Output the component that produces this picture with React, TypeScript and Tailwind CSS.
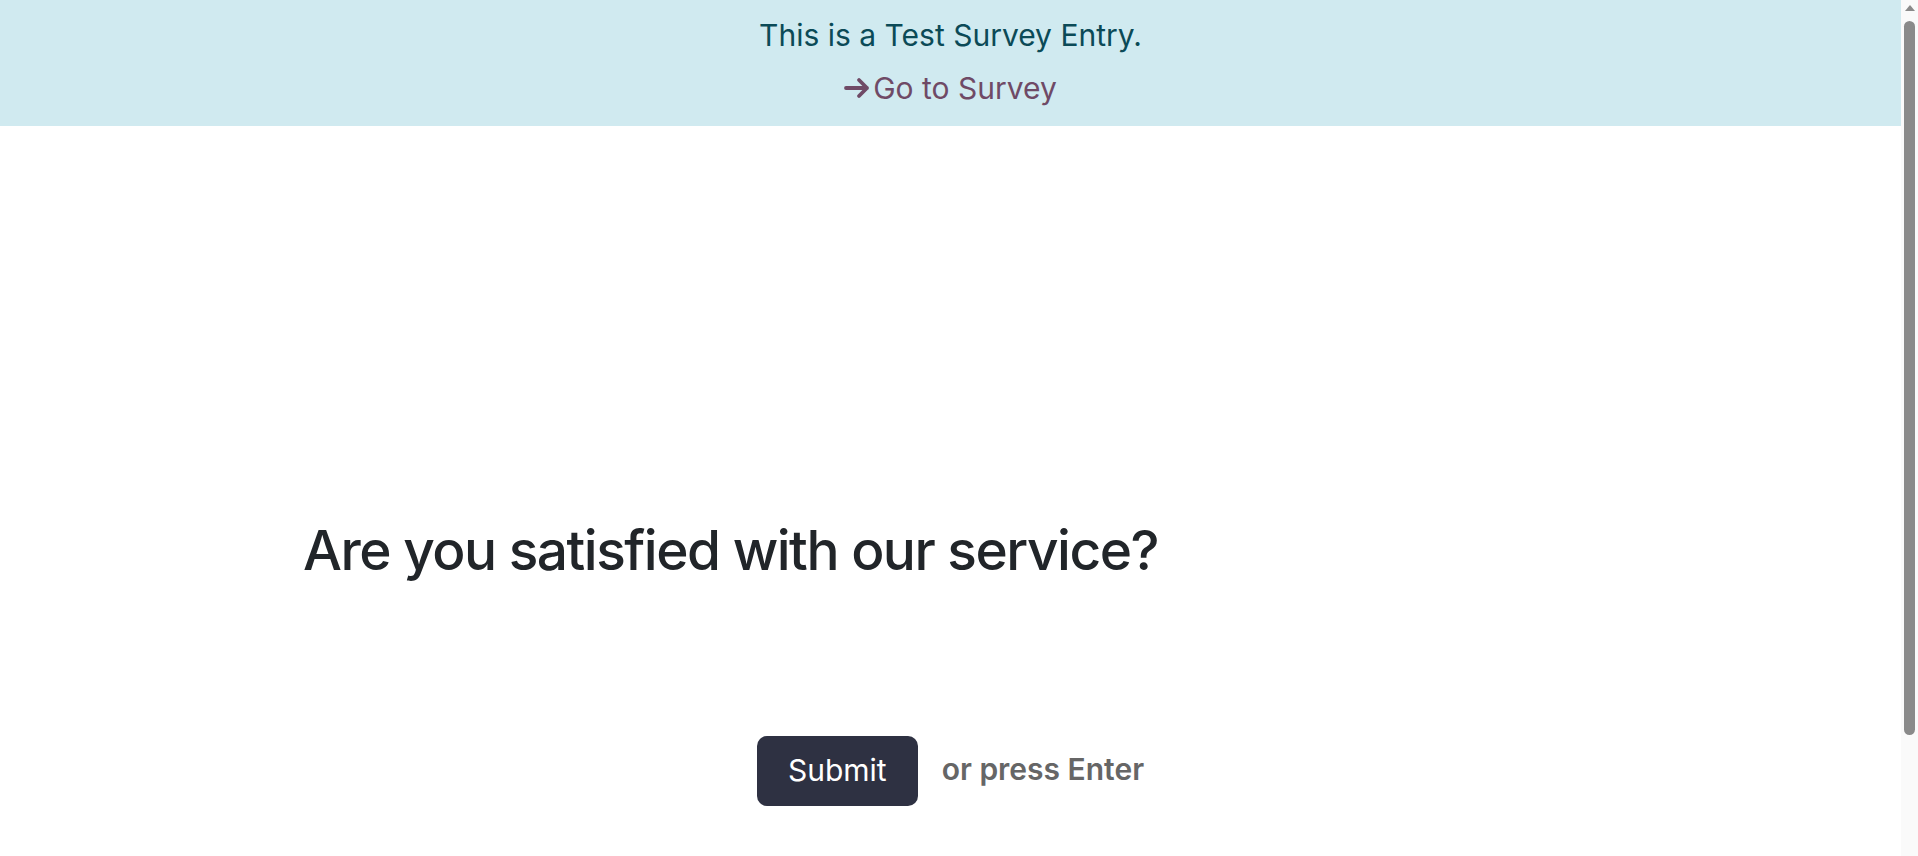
import React from "react";

export default function App() {
  return (
    <div
      className="flex h-[856px] w-full overflow-hidden bg-white"
      style={{ fontFamily: "Inter, 'Noto Sans', sans-serif" }}
    >
      <div className="flex flex-1 flex-col">
        <div className="flex h-[126px] flex-col items-center bg-[#d0eaf0] pt-[14px]">
          <div className="text-[30px] leading-[42px] text-[#0b4a57]">
            This is a Test Survey Entry.
          </div>
          <a className="mt-[11px] flex items-center text-[30px] leading-[42px] text-[#6f4a66]">
            <svg width="28" height="24" viewBox="0 0 28 24" className="mr-[1px]">
              <path
                d="M2 12 H23 M15 4 L23 12 L15 20"
                fill="none"
                stroke="#6f4a66"
                strokeWidth="3.8"
                strokeLinecap="round"
                strokeLinejoin="round"
              />
            </svg>
            Go to Survey
          </a>
        </div>
        <div className="mt-[391px] pl-[303px]">
          <h1 className="text-[55px] font-medium leading-[66px] tracking-[-1.5px] text-[#212529]">
            Are you satisfied with our service?
          </h1>
        </div>
        <div className="mt-[153px] flex items-center justify-center gap-[24px]">
          <button className="h-[70px] rounded-[10px] bg-[#2e3142] px-[31px] pb-[2px] text-[30px] text-white">
            Submit
          </button>
          <span className="mb-[4px] text-[30px] font-semibold text-[#666666]">or press Enter</span>
        </div>
      </div>
      <div className="flex w-[17px] flex-col items-center bg-[#fafafa]">
        <svg width="12" height="8" viewBox="0 0 12 8" className="mt-[4px]">
          <path d="M6 1 L11 7 L1 7 Z" fill="#8a8a8a" />
        </svg>
        <div className="mt-[9px] h-[714px] w-[11px] rounded-full bg-[#8a8a8a]" />
      </div>
    </div>
  );
}
